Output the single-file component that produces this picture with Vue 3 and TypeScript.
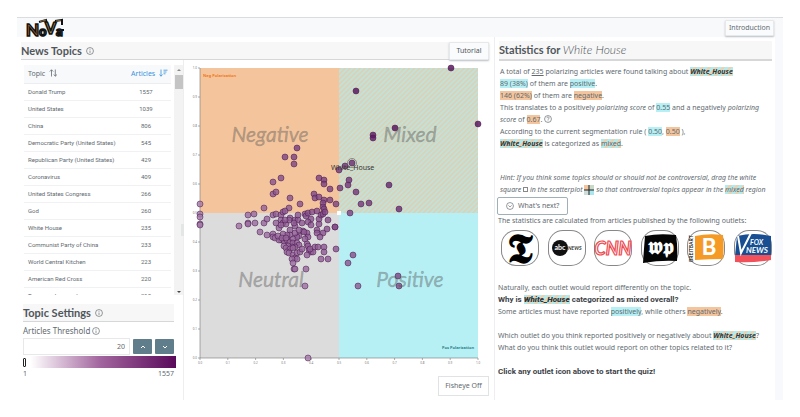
<script setup lang="ts">
import { computed, ref } from 'vue'

interface Topic {
  name: string
  articles: number
}

const topics: Topic[] = [
  { name: 'Donald Trump', articles: 1557 },
  { name: 'United States', articles: 1039 },
  { name: 'China', articles: 806 },
  { name: 'Democratic Party (United States)', articles: 545 },
  { name: 'Republican Party (United States)', articles: 429 },
  { name: 'Coronavirus', articles: 409 },
  { name: 'United States Congress', articles: 266 },
  { name: 'God', articles: 260 },
  { name: 'White House', articles: 235 },
  { name: 'Communist Party of China', articles: 233 },
  { name: 'World Central Kitchen', articles: 223 },
  { name: 'American Red Cross', articles: 220 },
  { name: 'Transgender people', articles: 215 },
]

const threshold = ref(20)
const sliderValue = ref(1)
const fisheye = ref(false)

// Plot area inside the chart's own coordinate system
const plot = { left: 16, top: 8, width: 278, height: 290 }
const ticks = Array.from({ length: 11 }, (_, i) => i / 10)
const px = (v: number) => plot.left + v * plot.width
const py = (v: number) => plot.top + (1 - v) * plot.height

// Topic positions as [x, y] pairs in chart coordinates
const points: [number, number][] = [
  [113, 88], [101, 97], [110, 97], [110, 104], [97, 118], [89, 122], [89, 134], [92, 132],
  [106, 138], [116, 144], [105, 148], [80, 148], [135, 118], [140, 120], [140, 124], [146, 129],
  [130, 134], [131, 138], [135, 137], [140, 140], [146, 140], [152, 144], [139, 143], [139, 147],
  [140, 149], [16, 144], [16, 154], [16, 157], [16, 164], [16, 165], [64, 155], [70, 154],
  [64, 163], [71, 163], [64, 164], [55, 166], [76, 172], [80, 163], [83, 159], [83, 175],
  [89, 174], [89, 177], [91, 178], [89, 155], [92, 154], [92, 163], [97, 155], [97, 160],
  [99, 152], [101, 151], [95, 168], [99, 163], [102, 164], [106, 158], [106, 170], [111, 160],
  [111, 166], [114, 160], [114, 155], [118, 163], [121, 154], [122, 156], [124, 153], [127, 159],
  [124, 162], [127, 165], [128, 152], [133, 151], [135, 164], [135, 159], [137, 155], [139, 154],
  [141, 152], [144, 160], [151, 167], [143, 169], [139, 173], [133, 170], [133, 173], [136, 177],
  [123, 173], [119, 171], [120, 172], [124, 177], [121, 179], [115, 176], [113, 177], [111, 173],
  [106, 175], [103, 175], [99, 174], [97, 180], [100, 181], [103, 180], [106, 182], [109, 179],
  [109, 183], [113, 183], [115, 185], [111, 187], [108, 187], [104, 186], [100, 186], [102, 188],
  [106, 189], [109, 188], [103, 192], [105, 193], [109, 195], [113, 193], [116, 192], [111, 198],
  [113, 199], [108, 199], [109, 203], [110, 209], [111, 209], [122, 209], [121, 226], [124, 298],
  [118, 189], [123, 184], [124, 186], [125, 190], [127, 192], [129, 192], [126, 189], [123, 195],
  [131, 187], [134, 187], [140, 187], [140, 192], [137, 199], [144, 199], [152, 189], [95, 180],
  [94, 176], [98, 178], [102, 178], [105, 160], [101, 160], [97, 165], [115, 170], [110, 163],
  [267, 8], [294, 64], [172, 31], [211, 68], [189, 75], [189, 78], [168, 103], [161, 106],
  [155, 110], [165, 120], [164, 125], [156, 128], [172, 132], [205, 125], [177, 144], [185, 143],
  [215, 149], [166, 153], [151, 167], [169, 195], [164, 203], [174, 226], [214, 216], [215, 226],
]

// Dots darken with overall polarization
const dots = computed(() =>
  points.map(([x, y]) => {
    const score = (x - plot.left) / plot.width + (plot.top + plot.height - y) / plot.height
    const t = Math.min(1, Math.max(0, (score - 0.55) / 0.95))
    const mix = (a: number, b: number) => Math.round(a + (b - a) * t)
    return { x, y, fill: `rgb(${mix(164, 82)}, ${mix(120, 10)}, ${mix(168, 88)})` }
  }),
)
</script>

<template>
  <div class="page">
    <header class="topbar">
      <svg class="brand" viewBox="0 0 42 20" role="img" aria-label="NoVa">
        <path d="M14 4l7-2 1 4M30 3l7-1v5M33 12h6" fill="none" stroke="#111" stroke-width="2" />
        <text x="1" y="18" font-size="17" fill="#c07a45">N</text>
        <text x="14" y="18" font-size="13" fill="#4b8d9c">o</text>
        <text x="20" y="16" font-size="16" fill="#a58a45">V</text>
        <text x="31" y="18" font-size="13" fill="#4ea6b4">a</text>
        <path d="M15 3.500l6-1.500M31 3l5-.8" fill="none" stroke="#b3894c" stroke-width=".7" />
      </svg>
      <button class="raised intro" type="button">Introduction</button>
    </header>

    <main class="body">
      <section class="explore">
        <div class="titlebar main-title">
          <h1>News Topics</h1>
          <svg class="info" viewBox="0 0 10 10" aria-hidden="true">
            <circle cx="5" cy="5" r="4.300" /><path d="M5 4.400v3M5 2.400v1" />
          </svg>
          <button class="raised tutorial" type="button">Tutorial</button>
        </div>

        <div class="columns">
          <aside class="side">
            <div class="list">
              <div class="list-view">
                <table>
                  <thead>
                    <tr>
                      <th scope="col">
                        Topic
                        <svg class="sort" viewBox="0 0 9 8" aria-hidden="true">
                          <path d="M2.500 7.500V.8M.8 2.500 2.500.8l1.700 1.700M6.300.5v6.700M4.800 5.500l1.500 1.700 1.700-1.700" />
                        </svg>
                      </th>
                      <th scope="col" class="num active">
                        Articles
                        <svg class="sort" viewBox="0 0 9 8" aria-hidden="true">
                          <path d="M2 .5v6.700M.5 5.500 2 7.200l1.500-1.700M4.500 1.200h4M4.500 3h3M4.500 4.800h2" />
                        </svg>
                      </th>
                    </tr>
                  </thead>
                  <tbody>
                    <tr v-for="topic in topics" :key="topic.name">
                      <td>{{ topic.name }}</td>
                      <td class="num"><span>{{ topic.articles }}</span></td>
                    </tr>
                  </tbody>
                </table>
              </div>
              <div class="scroll" aria-hidden="true">
                <i class="up"></i><i class="thumb"></i><i class="down"></i>
              </div>
            </div>

            <div class="settings">
              <div class="titlebar">
                <h2>Topic Settings</h2>
                <svg class="info" viewBox="0 0 10 10" aria-hidden="true">
                  <circle cx="5" cy="5" r="4.300" /><path d="M5 4.400v3M5 2.400v1" />
                </svg>
              </div>
              <label class="field-label" for="threshold">
                Articles Threshold
                <svg class="info" viewBox="0 0 10 10" aria-hidden="true">
                  <circle cx="5" cy="5" r="4.300" /><path d="M5 4.400v3M5 2.400v1" />
                </svg>
              </label>
              <div class="stepper">
                <input id="threshold" v-model.number="threshold" type="text" inputmode="numeric" />
                <button type="button" aria-label="Increase" @click="threshold++">
                  <svg viewBox="0 0 6 6"><path d="M1 4l2-2 2 2" /></svg>
                </button>
                <button type="button" aria-label="Decrease" @click="threshold--">
                  <svg viewBox="0 0 6 6"><path d="M1 2l2 2 2-2" /></svg>
                </button>
              </div>
              <input v-model.number="sliderValue" class="range" type="range" min="1" max="1557" aria-label="Articles Threshold" />
              <div class="bounds"><span>1</span><span>1557</span></div>
            </div>
          </aside>

          <div class="splitter" aria-hidden="true"><i></i></div>

          <div class="chart">
            <svg class="plot" viewBox="0 0 310 308" role="img" aria-label="Topic polarization scatterplot">
              <defs>
                <pattern id="hatch" width="3.500" height="3.500" patternUnits="userSpaceOnUse" patternTransform="rotate(45)">
                  <rect width="3.500" height="3.500" fill="#bde3dc" />
                  <rect width="1.700" height="3.500" fill="#dfd0b4" />
                </pattern>
              </defs>
              <rect x="16" y="8" width="139" height="145" fill="#f4c59d" />
              <rect x="155" y="8" width="139" height="145" fill="url(#hatch)" />
              <rect x="16" y="153" width="139" height="145" fill="#dcdcdc" />
              <rect x="155" y="153" width="139" height="145" fill="#b6f0f5" />

              <g class="axis">
                <path d="M16 8v290h278" />
                <template v-for="t in ticks" :key="t">
                  <path :d="`M${px(t)} 298v2M${px(0)} ${py(t)}h-2`" />
                  <text :x="px(t)" y="304" text-anchor="middle">{{ t.toFixed(1) }}</text>
                  <text x="13" :y="py(t) + 1" text-anchor="end">{{ t.toFixed(1) }}</text>
                </template>
              </g>

              <text class="pole" x="19" y="17" fill="#f07820">Neg Polarization</text>
              <text class="pole" x="290" y="289" text-anchor="end" fill="#2b7f88">Pos Polarization</text>

              <g>
                <circle v-for="(d, i) in dots" :key="i" class="dot" :cx="d.x" :cy="d.y" r="3" :fill="d.fill" />
                <circle cx="168" cy="103" r="4.500" fill="none" stroke="#555" stroke-width=".6" />
              </g>
              <g class="zone">
                <text x="86" y="82">Negative</text>
                <text x="226" y="82">Mixed</text>
                <text x="87" y="227">Neutral</text>
                <text x="226" y="227">Positive</text>
              </g>
              <text class="picked" x="147" y="110">White_House</text>
              <rect x="153" y="151" width="4" height="4" fill="#fff" />
            </svg>
            <button class="fisheye" type="button" @click="fisheye = !fisheye">
              Fisheye {{ fisheye ? 'On' : 'Off' }}
            </button>
          </div>
        </div>
      </section>

      <section class="stats">
        <div class="titlebar wide">
          <h2>Statistics for <em>White House</em></h2>
        </div>
        <div class="summary">
          <p>A total of <u>235</u> polarizing articles were found talking about <b class="mix topic">White_House</b></p>
          <p><span class="pos">89 (38%)</span> of them are <span class="pos">positive</span>.</p>
          <p><span class="neg">146 (62%)</span> of them are <span class="neg">negative</span>.</p>
          <p>
            This translates to a positively <em>polarizing score</em> of <span class="pos">0.55</span> and a negatively
            <em>polarizing</em> <em>score</em> of <span class="neg">0.67</span>.
            <svg class="info" viewBox="0 0 10 10" aria-hidden="true">
              <circle cx="5" cy="5" r="4.300" /><path d="M3.600 4c0-2 2.800-2 2.800-.2C6.400 5 5 4.900 5 6M5 6.900v.8" />
            </svg>
          </p>
          <p>According to the current segmentation rule ( <span class="pos">0.50</span>, <span class="neg">0.50</span> ),</p>
          <p><b class="mix topic">White_House</b> is categorized as <span class="mix">mixed</span>.</p>
        </div>
        <p class="hint">
          Hint: If you think some topics should or should not be controversial, drag the white square
          <i class="square"></i> in the scatterplot
          <svg class="quad" viewBox="0 0 10 10" aria-hidden="true">
            <path d="M0 0h5v5H0z" fill="#f4c59d" /><path d="M5 0h5v5H5z" fill="#c9d9c8" />
            <path d="M0 5h5v5H0z" fill="#cfdcdc" /><path d="M5 5h5v5H5z" fill="#a9e6ee" />
            <path d="M5 0v10M0 5h10" stroke="#222" stroke-width="1" />
          </svg>
          so that controversial topics appear in the <span class="mix">mixed</span> region
        </p>
        <button class="next" type="button">
          <svg class="info" viewBox="0 0 10 10" aria-hidden="true">
            <circle cx="5" cy="5" r="4.300" /><path d="M3 4.200l2 2 2-2" />
          </svg>
          What's next?
        </button>
        <div class="quiz">
          <p>The statistics are calculated from articles published by the following outlets:</p>
          <div class="outlets">
            <button type="button" aria-label="The New York Times">
              <svg viewBox="0 0 38 36">
                <text x="19" y="33" font-size="42" text-anchor="middle" class="serif">𝕿</text>
              </svg>
            </button>
            <button type="button" aria-label="ABC News">
              <svg viewBox="0 0 38 36">
                <circle cx="12" cy="18" r="8" fill="#111" />
                <text x="12" y="20" font-size="7" text-anchor="middle" fill="#fff" class="hand">abc</text>
                <text x="20" y="20" font-size="5" fill="#333" class="hand light">NEWS</text>
              </svg>
            </button>
            <button type="button" aria-label="CNN">
              <svg viewBox="0 0 38 36">
                <text x="19" y="25" font-size="18" text-anchor="middle" class="cnn">CNN</text>
              </svg>
            </button>
            <button type="button" aria-label="The Washington Post">
              <svg viewBox="0 0 38 36">
                <path d="M4 6Q18 3 35 5 37 18 36 31 20 30 2 33 3 18 4 6z" fill="#050505" />
                <text x="20" y="24" font-size="21" text-anchor="middle" fill="#fff" class="serif">𝖜𝖕</text>
              </svg>
            </button>
            <button type="button" aria-label="Breitbart">
              <svg viewBox="0 0 38 36">
                <path d="M8 6Q22 3 36 5 37 18 36 29 22 29 8 30z" fill="#f49a25" />
                <text x="22" y="25" font-size="22" text-anchor="middle" fill="#fff" class="hand bold">B</text>
                <text transform="translate(6 32) rotate(-90)" font-size="5" fill="#222" class="hand">BREITBART</text>
              </svg>
            </button>
            <button type="button" aria-label="Fox News">
              <svg viewBox="0 0 38 36">
                <path d="M3 6Q20 2 37 6V26H1z" fill="#174f92" />
                <path d="M1 25H37V30Q20 33 1 32z" fill="#f2505a" />
                <path d="M4 6 7 23 17 3" fill="none" stroke="#fff" stroke-width="2" />
                <text x="16" y="15" font-size="7" fill="#fff" class="hand light">FOX</text>
                <text x="12" y="23" font-size="8" fill="#fff" class="hand light">NEWS</text>
              </svg>
            </button>
          </div>
          <p>Naturally, each outlet would report differently on the topic.</p>
          <p class="strong">Why is <b class="mix topic">White_House</b> categorized as mixed overall?</p>
          <p>Some articles must have reported <span class="pos">positively</span>, while others <span class="neg">negatively</span>.</p>
          <p class="gap">Which outlet do you think reported positively or negatively about <b class="mix topic">White_House</b>?</p>
          <p>What do you think this outlet would report on other topics related to it?</p>
          <p class="gap strong">Click any outlet icon above to start the quiz!</p>
        </div>
      </section>
    </main>
  </div>
</template>

<style>
body {
  margin: 0;
  background: #fff;
}
</style>

<style scoped>
* {
  box-sizing: border-box;
}
.page {
  padding: 17px;
  color: #626a70;
  font: 7px/12px 'Noto Sans', 'Open Sans', sans-serif;
}
h1,
h2,
p {
  margin: 0;
}
button {
  font: inherit;
  color: inherit;
  padding: 0;
  cursor: pointer;
}
.topbar {
  display: flex;
  align-items: center;
  justify-content: space-between;
  height: 20px;
  padding: 0 9px 0 8px;
  border-top: 1px solid #d9dde0;
  background: #f8f9fb;
}
.brand {
  width: 42px;
  height: 20px;
  overflow: visible;
  font-family: Lato, sans-serif;
  font-weight: 900;
}
.brand text {
  stroke: #111;
  stroke-width: 1.5;
}
.raised {
  border: 1px solid #e6e8ea;
  background: #fafbfc;
  box-shadow: 0 1px 2px #b8bec4;
  border-radius: 1px;
}
.intro {
  width: 49px;
  height: 16px;
  line-height: 14px;
}
.body {
  display: grid;
  grid-template-columns: 477fr 281fr;
  padding-right: 8px;
  background: linear-gradient(#f8f9fc, #f8f9fc) right / 8px 100% no-repeat;
}
.explore {
  padding: 5px 0 0 4px;
}
.titlebar {
  display: flex;
  align-items: center;
  gap: 4px;
  height: 18px;
  border-bottom: 1px solid #d5d7d9;
  background: #f7f7f7;
  color: #50565b;
}
.titlebar h1,
.titlebar h2 {
  font: 700 11px/16px Lato, sans-serif;
}
.main-title {
  margin-right: 5px;
}
.info {
  width: 8px;
  height: 8px;
  fill: none;
  stroke: #596066;
  stroke-width: 0.8;
  vertical-align: -1px;
}
.tutorial {
  width: 40px;
  height: 18px;
  margin-left: auto;
}
.columns {
  display: grid;
  grid-template-columns: minmax(0, 162fr) 1px minmax(0, 310fr);
  min-height: 340px;
}
.side {
  padding-top: 5px;
}
.list {
  display: flex;
  height: 230px;
  padding-left: 3px;
}
.list-view {
  flex: 1;
  min-width: 0;
  overflow: hidden;
}
table {
  width: 100%;
  border-collapse: collapse;
}
th {
  height: 18px;
  padding: 0 0 0 4px;
  border-bottom: 1px solid #ebedef;
  background: #f8f9fb;
  font-weight: 400;
  text-align: left;
  white-space: nowrap;
}
td {
  height: 17px;
  padding: 0 0 0 4px;
  border-bottom: 1px solid #f0f1f2;
  font: 6px/12px Roboto, 'Noto Sans', sans-serif;
  white-space: nowrap;
}
th.num {
  padding-right: 3px;
  text-align: right;
}
td.num {
  width: 54px;
  padding: 0 10px 0 0;
  text-align: center;
}
td.num span {
  padding-left: 14px;
}
.active {
  color: #3793dc;
}
.sort {
  width: 9px;
  height: 8px;
  margin-left: 2px;
  fill: none;
  stroke: currentColor;
  stroke-width: 0.8;
  vertical-align: -1px;
}
.scroll {
  display: flex;
  flex: none;
  flex-direction: column;
  align-items: center;
  width: 9px;
  margin-left: 3px;
  background: #f3f3f3;
}
.up,
.down {
  border: 2px solid transparent;
}
.up {
  margin: 2px 0 4px;
  border-bottom-color: #888;
}
.thumb {
  width: 8px;
  height: 14px;
  background: #c4c4c4;
}
.down {
  margin-top: auto;
  border-top-color: #444;
}
.settings {
  padding: 9px 9px 0 2px;
}
.field-label {
  display: block;
  margin: 3px 0 1px;
  font-size: 8px;
}
.stepper {
  display: flex;
  gap: 3px;
  height: 17px;
}
.stepper input {
  flex: 1;
  min-width: 0;
  padding: 0 4px;
  border: 1px solid #e6e8ea;
  background: #fff;
  color: inherit;
  font: inherit;
  text-align: right;
}
.stepper button {
  width: 19px;
  height: 15px;
  margin-top: 1px;
  border: 0;
  border-radius: 1px;
  background: #607d8b;
  line-height: 0;
}
.stepper svg {
  width: 6px;
  height: 6px;
  fill: none;
  stroke: #fff;
}
.range {
  display: block;
  width: calc(100% + 2px);
  height: 12px;
  margin: 1px 0 0;
  appearance: none;
  background: linear-gradient(90deg, #fff 5%, #a3669f 50%, #590a5a);
}
.range::-webkit-slider-thumb {
  appearance: none;
  width: 3px;
  height: 9px;
  border: 1px solid #222;
  border-radius: 1px;
  background: #fff;
}
.bounds {
  display: flex;
  justify-content: space-between;
}
.splitter {
  display: flex;
  align-items: center;
  border-right: 1px solid #eceef0;
}
.splitter i {
  flex: none;
  width: 3px;
  height: 12px;
  margin-left: -2px;
  background: #e3e5e7;
}
.chart {
  display: flex;
  flex-direction: column;
  align-items: flex-end;
}
.plot {
  width: 100%;
  overflow: visible;
}
.axis path {
  fill: none;
  stroke: #777;
  stroke-width: 0.6;
}
.axis text {
  fill: #777;
  font-size: 3px;
}
.pole {
  font-size: 4px;
  font-weight: 700;
}
.dot {
  fill-opacity: 0.8;
  stroke: #48184e;
  stroke-width: 0.7;
  stroke-opacity: 0.75;
}
.zone text {
  fill: #555;
  fill-opacity: 0.4;
  font: italic 400 21px Lato, sans-serif;
  stroke: #555;
  stroke-opacity: 0.25;
  stroke-width: 0.6;
  text-anchor: middle;
}
.picked {
  fill: #333;
  font-size: 7px;
}
.fisheye {
  width: 51px;
  height: 20px;
  margin: 8px 5px 0 0;
  border: 1px solid #e0e3e5;
  background: #fff;
}
.stats {
  padding: 4px 3px 0 4px;
  border-left: 1px solid #eceef0;
}
.wide {
  height: 20px;
  border-bottom-width: 2px;
}
.wide em {
  font-size: 12px;
  font-weight: 300;
}
.summary {
  padding: 5px 0 0 1px;
}
.pos {
  background: #b6f0f5;
}
.neg {
  background: #f4c59d;
}
.mix {
  background: repeating-linear-gradient(135deg, #b0ecee 0 3px, #efd0ae 3px 5px);
}
.topic {
  color: #333;
  font-style: italic;
}
.hint {
  padding: 22px 0 0 1px;
  font-style: italic;
}
.square {
  display: inline-block;
  width: 5px;
  height: 5px;
  border: 1px solid #888;
}
.quad {
  width: 10px;
  height: 10px;
  margin: -3px 0;
  vertical-align: 0;
}
.next {
  display: flex;
  align-items: center;
  gap: 4px;
  height: 18px;
  margin: 1px 0 0 -2px;
  padding: 0 8px;
  border: 1px solid #9fb0b8;
  border-radius: 2px;
  background: #fff;
}
.quiz {
  margin-left: -1px;
}
.outlets {
  display: flex;
  justify-content: space-between;
  margin: 3px 0 16px;
  padding-left: 3px;
}
.outlets button {
  width: 38px;
  height: 36px;
  border: 0;
  border-radius: 15px;
  background: #fff;
  box-shadow: inset 0 0 0 1px #888;
  line-height: 0;
}
.outlets svg {
  width: 38px;
  height: 36px;
  overflow: visible;
}
.serif {
  font-family: 'DejaVu Sans', 'DejaVu Serif', serif;
  font-weight: 700;
}
.hand {
  font-family: Lato, sans-serif;
  font-weight: 700;
}
.hand.bold {
  font-weight: 900;
}
.light {
  font-style: italic;
}
.cnn {
  fill: #fff;
  stroke: #ee4a50;
  stroke-width: 1.2;
  font-family: Lato, sans-serif;
  font-style: italic;
  font-weight: 700;
}
.gap {
  margin-top: 12px;
}
.strong {
  color: #3d4348;
  font-family: Roboto, sans-serif;
  font-size: 8px;
  font-weight: 700;
}
</style>
